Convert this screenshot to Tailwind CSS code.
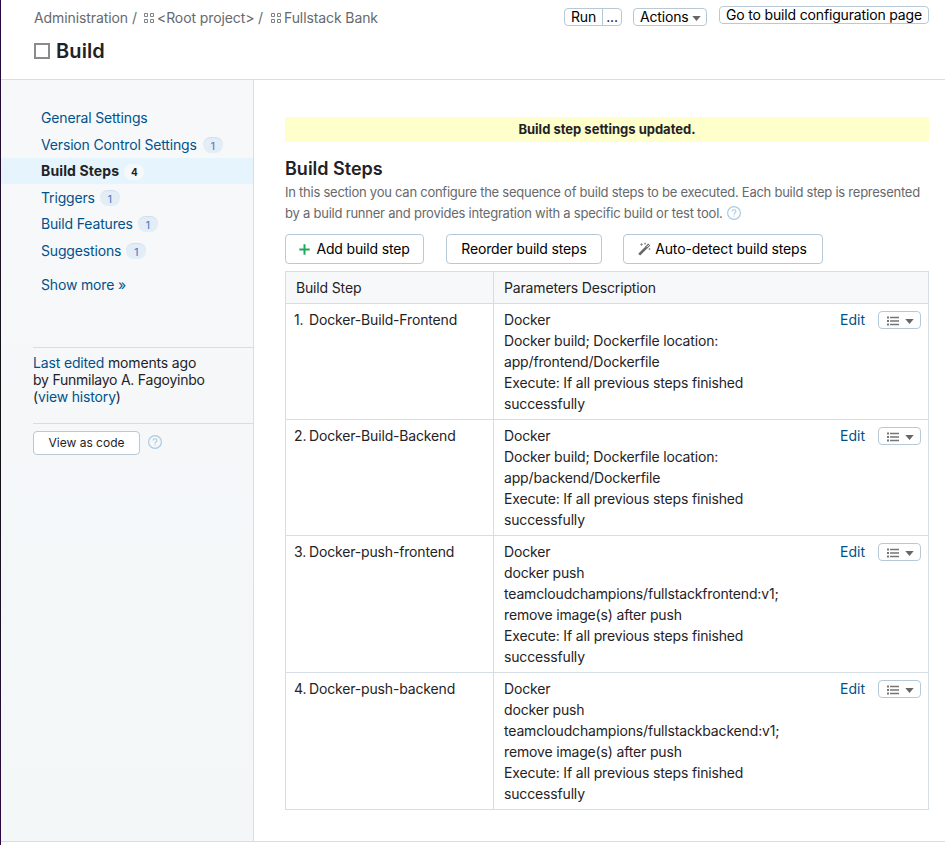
<!DOCTYPE html>
<html lang="en">
<head>
<meta charset="utf-8">
<title>Build</title>
<script src="https://cdn.jsdelivr.net/npm/@tailwindcss/browser@4"></script>
</head>
<body class="w-[945px] h-[845px] overflow-hidden flex bg-white font-['Inter','Liberation_Sans',sans-serif] text-sm leading-[21px] tracking-[-0.16px] text-[#1f2326]">
<svg class="hidden">
  <symbol id="proj" viewBox="0 0 11 11"><path d="M.5 .5h3v3h-3zM6.500 .5h3v3h-3zM.5 6.500h3v3h-3zM6.500 6.500h3v3h-3z" fill="none" stroke="#808284"/></symbol>
  <symbol id="help" viewBox="0 0 14 14"><circle cx="7" cy="7" r="6.4" fill="none" stroke="#a9cbe3" stroke-width="1.2"/><path d="M5.1 5.6c0-2.5 3.8-2.4 3.8-.1C8.900 6.900 7 6.900 7 8.400" fill="none" stroke="#a9cbe3" stroke-width="1.2"/><path d="M6.400 9.400h1.200v1.200H6.400z" fill="#a9cbe3"/></symbol>
  <symbol id="caret" viewBox="0 0 9 5"><path d="M.3 0h8.400L4.500 5z" fill="#666"/></symbol>
  <symbol id="list" viewBox="0 0 12 10"><path d="M0 .5h2v2H0zM0 4h2v2H0zM0 7.500h2v2H0zM3 .8h9v1.400H3zM3 4.300h9v1.400H3zM3 7.800h9v1.400H3z" fill="#737577"/></symbol>
</svg>
<div class="w-px shrink-0 bg-linear-to-b from-[#2a0845] via-[#111] to-[#2a0845]"></div>
<div class="flex-1 flex flex-col">
  <header class="h-20 shrink-0 border-b border-[#d8dde6] pl-[33px] pr-4 flex justify-between">
    <div>
      <nav class="mt-[7px] flex items-center text-[#67696c] tracking-[-0.1px] whitespace-pre"><span class="w-[94px]">Administration</span><span class="w-[5px] ml-1">/</span><svg class="w-[11px] h-[11px] ml-[7px] mr-[2px] mt-px"><use href="#proj"/></svg><span class="w-[97px]">&lt;Root project&gt;</span><span class="w-[5px] ml-1">/</span><svg class="w-[11px] h-[11px] ml-[8px] mr-[2px] mt-px"><use href="#proj"/></svg><span>Fullstack Bank</span></nav>
      <h1 class="mt-[11px] flex items-center text-xl leading-6 font-semibold tracking-[0.1px]"><span class="w-4 h-4 border-2 border-[#8a8b8c] mr-[6px]"></span>Build</h1>
    </div>
    <div class="flex items-start text-black leading-4">
      <div class="mt-2 h-[18px] flex border border-[#b7c9d6] rounded mr-[11px]"><span class="w-[38px] text-center border-r border-[#b7c9d6]">Run</span><span class="w-[18px] text-center">...</span></div>
      <div class="mt-2 h-[18px] w-[74px] pl-[6px] flex items-center border border-[#b7c9d6] rounded mr-3">Actions<svg class="w-[9px] h-[5px] ml-[3px] mt-[2px]"><use href="#caret"/></svg></div>
      <div class="mt-[6px] h-[18px] w-[210px] flex justify-center items-center whitespace-nowrap border border-[#b7c9d6] rounded">Go to build configuration page</div>
    </div>
  </header>
  <div class="h-[762px] shrink-0 flex border-b border-[#d8dde0]">
    <aside class="w-[253px] shrink-0 border-r border-[#d8dde6] bg-linear-to-b from-[#f7f8fa] to-[#f3f7f8] text-[#00528c]">
      <ul class="pt-[25px]">
        <li class="h-[27px] pl-10 pb-[2px] flex items-center">General Settings</li>
        <li class="h-[26px] pl-10 flex items-center"><span class="-mt-px">Version Control Settings</span><span class="ml-[6px] w-5 h-4 rounded-full bg-[#e3edf6] border-t border-[#cfdfee] text-[#4d80c4] text-[10px] font-medium leading-4 text-center">1</span></li>
        <li class="h-[26px] pl-10 flex items-center bg-[#e6f4fd] text-[#1f2326] font-bold"><span class="-mt-px tracking-[0.12px]">Build Steps</span><span class="ml-[5px] mt-px w-5 h-4 rounded-full bg-[#f7f8fa] text-[10px] leading-4 text-center">4</span></li>
        <li class="h-[27px] pl-10 flex items-center">Triggers<span class="ml-[5px] w-5 h-4 rounded-full bg-[#e3edf6] border-t border-[#cfdfee] text-[#4d80c4] text-[10px] font-medium leading-4 text-center">1</span></li>
        <li class="h-[26px] pl-10 flex items-center"><span class="-mt-px">Build Features</span><span class="ml-[5px] w-5 h-4 rounded-full bg-[#e3edf6] border-t border-[#cfdfee] text-[#4d80c4] text-[10px] font-medium leading-4 text-center">1</span></li>
        <li class="h-[27px] pl-10 flex items-center">Suggestions<span class="ml-[5px] w-5 h-4 rounded-full bg-[#e3edf6] border-t border-[#cfdfee] text-[#4d80c4] text-[10px] font-medium leading-4 text-center">1</span></li>
        <li class="mt-[10px] pl-10">Show more »</li>
      </ul>
      <div class="ml-8 mt-[52px] h-[76px] pt-[6px] border-t border-[#d8dde0] leading-[17px]">Last edited <span class="text-[#1f2326]">moments ago<br><span class="tracking-[-0.24px]">by Funmilayo A. Fagoyinbo</span><br>(</span>view history<span class="text-[#1f2326]">)</span></div>
      <div class="ml-8 pt-[7px] border-t border-[#d8dde0] flex items-center">
        <span class="w-[107px] h-6 border border-[#b7c9d6] rounded bg-white text-[#1f2326] text-xs leading-[22px] tracking-normal text-center">View as code</span>
        <svg class="w-[14px] h-[14px] ml-2 -mt-[2px]"><use href="#help"/></svg>
      </div>
    </aside>
    <main class="pl-[31px] w-[675px] pt-[37px]">
      <div class="h-[25px] bg-[#feffcb] text-[13px] leading-[25px] font-bold tracking-normal text-center">Build step settings updated.</div>
      <h2 class="mt-[15px] text-lg leading-6 font-semibold tracking-normal">Build Steps</h2>
      <p class="mt-px text-[13px] leading-[21px] tracking-[-0.25px] text-[#67696c] whitespace-nowrap">In this section you can configure the sequence of build steps to be executed. Each build step is represented<br><span class="tracking-[-0.225px]">by a build runner and provides integration with a specific build or test tool. </span><svg class="inline w-[14px] h-[14px] ml-px align-[-2px]"><use href="#help"/></svg></p>
      <div class="mt-[10px] flex text-black">
        <div class="w-[139px] h-[30px] mr-[22px] flex items-center justify-center border border-[#b7c9d6] rounded"><svg class="w-[11px] h-[11px] mr-[6px]" viewBox="0 0 11 11"><path d="M5.500 .3v10.400M.3 5.500h10.400" stroke="#21a95b" stroke-width="2"/></svg><span class="-mt-px">Add build step</span></div>
        <div class="w-[156px] h-[30px] mr-[21px] pb-px flex items-center justify-center border border-[#b7c9d6] rounded">Reorder build steps</div>
        <div class="w-[200px] h-[30px] pr-px flex items-center justify-center border border-[#b7c9d6] rounded"><svg class="w-[13px] h-[14px] mr-1 -mt-px" viewBox="0 0 13 14"><path d="M1.200 12.600l7-7" stroke="#666" stroke-width="2.600"/><path d="M8 5.800l3.200-3.200" stroke="#666" stroke-width="2.800"/><path d="M8.600 5.200l2.300-2.300" stroke="#fff" stroke-width="1"/><path d="M3.500 1v3M2 2.500h3M7 .6v2M6 1.600h2M11.500 6v2M10.500 7h2" stroke="#8a8b8c" stroke-width=".8"/></svg><span class="-mt-px">Auto-detect build steps</span></div>
      </div>
      <table class="mt-[7px] w-[644px] table-fixed border-collapse text-left align-top">
        <colgroup><col class="w-[208px]"><col></colgroup>
        <thead><tr class="h-8 bg-[#f7f8fa]"><th class="border border-[#d5dde5] pl-[10px] font-normal">Build Step</th><th class="border border-[#d5dde5] pl-[10px] font-normal">Parameters Description</th></tr></thead>
        <tbody id="steps"></tbody>
      </table>
    </main>
  </div>
</div>
<script>
const steps = [
  ['Docker-Build-Frontend', 'Docker build; Dockerfile location:<br>app/frontend/Dockerfile'],
  ['Docker-Build-Backend', 'Docker build; Dockerfile location:<br>app/backend/Dockerfile'],
  ['Docker-push-frontend', 'docker push<br>teamcloudchampions/fullstackfrontend:v1;<br>remove image(s) after push'],
  ['Docker-push-backend', 'docker push<br>teamcloudchampions/fullstackbackend:v1;<br>remove image(s) after push']
];
document.getElementById('steps').innerHTML = steps.map(([name, text], i) => `
<tr class="align-top">
  <td class="border border-[#d5dde5] pl-2 py-[5px] whitespace-nowrap"><span class="inline-block w-[15px]">${i + 1}.</span>${name}</td>
  <td class="border border-[#d5dde5] pl-[10px] pr-[7px] py-[5px]"><div class="flex items-start">
    <div class="flex-1 whitespace-nowrap">Docker<br>${text}<br>Execute: If all previous steps finished<br>successfully</div>
    <span class="text-[#00528c] tracking-normal mr-[13px]">Edit</span>
    <span class="mt-[2px] w-[43px] h-[18px] border border-[#b7c9d6] rounded flex items-center pl-2"><svg class="w-3 h-[10px] mt-px"><use href="#list"/></svg><svg class="w-[9px] h-[5px] ml-[6px] mt-[2px]"><use href="#caret"/></svg></span>
  </div></td>
</tr>`).join('');
</script>
</body>
</html>
